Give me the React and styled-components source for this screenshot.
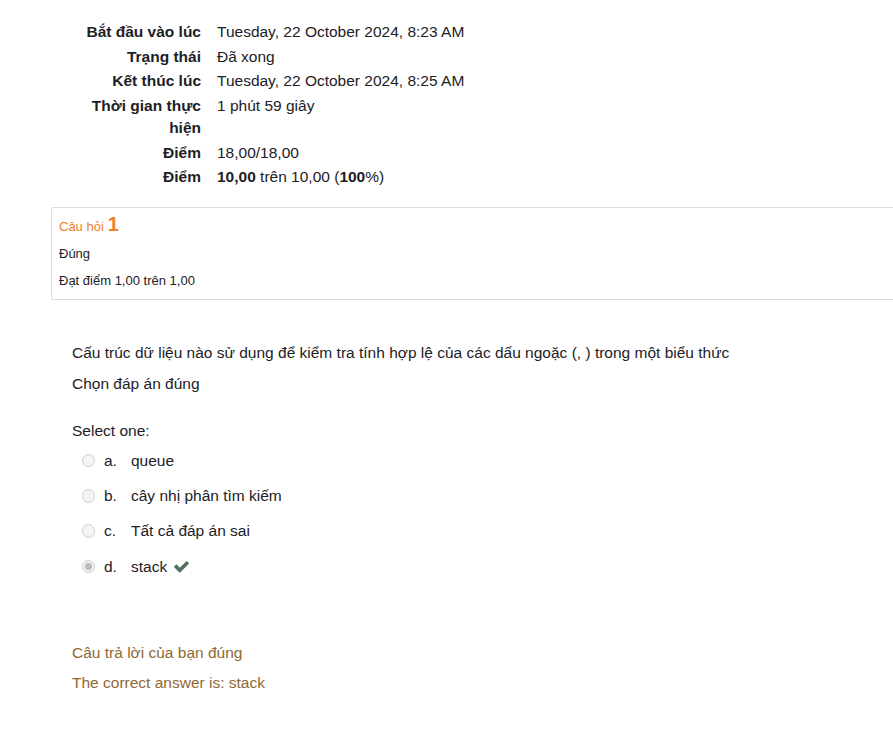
import React from 'react';
import styled, { createGlobalStyle } from 'styled-components';

const Global = createGlobalStyle`
  html, body { margin: 0; padding: 0; background: #fff; overflow: hidden; }
  body { font-family: "Liberation Sans", Arial, sans-serif; color: #1d2125; }
`;

const Page = styled.div`
  padding: 20px 0 0 51px;
  width: 900px;
`;

const Summary = styled.div`
  display: grid;
  grid-template-columns: 120px auto;
  column-gap: 16px;
  margin-left: 30px;
  font-size: 15.5px;
  line-height: 22.5px;
`;

const Label = styled.div`
  text-align: right;
  font-weight: bold;
  padding: 1px 0;
`;

const Value = styled.div`
  padding: 1px 0;
`;

const InfoBox = styled.div`
  margin-top: 17.5px;
  width: 880px;
  border: 1px solid #dcdcdc;
  border-radius: 2px;
  padding: 1px 7px 5px;
  box-sizing: border-box;
`;

const QNo = styled.div`
  display: flex;
  align-items: baseline;
  gap: 4px;
  height: 30px;
  line-height: 30px;
  color: #f0802a;
  font-size: 13px;
`;

const QNum = styled.span`
  font-size: 20px;
  font-weight: bold;
`;

const InfoLine = styled.div`
  font-size: 13px;
  line-height: 27px;
  color: #1d2125;
  padding-top: ${(p) => (p.$first ? 1 : 0)}px;
`;

const Content = styled.div`
  padding-left: 21px;
  font-size: 15.5px;
`;

const Para = styled.div`
  line-height: 24px;
  margin-top: ${(p) => p.$mt || 0}px;
`;

const OptionRow = styled.div`
  display: flex;
  align-items: center;
  height: 35.3px;
  padding-left: 9.5px;
`;

const Radio = styled.span`
  width: 13.5px;
  height: 13.5px;
  border-radius: 50%;
  box-sizing: border-box;
  border: 1px solid #cfcfcf;
  background: ${(p) =>
    p.$checked
      ? 'radial-gradient(circle, #bdbdbd 0 3.3px, #f2f2f2 3.9px)'
      : '#f4f4f4'};
  margin-right: 9px;
  flex: none;
`;

const Letter = styled.span`
  width: 27px;
`;

const Check = styled.svg`
  width: 17px;
  height: 17px;
  margin-left: 6px;
  fill: #52705a;
`;

const Feedback = styled.div`
  color: #8e6935;
  line-height: 24px;
  margin-top: ${(p) => p.$mt || 0}px;
`;

const rows = [
  ['Bắt đầu vào lúc', 'Tuesday, 22 October 2024, 8:23 AM'],
  ['Trạng thái', 'Đã xong'],
  ['Kết thúc lúc', 'Tuesday, 22 October 2024, 8:25 AM'],
  ['Thời gian thực hiện', '1 phút 59 giây'],
  ['Điểm', '18,00/18,00'],
  [
    'Điểm',
    <>
      <b>10,00</b> trên 10,00 (<b>100</b>%)
    </>,
  ],
];

const options = [
  ['a.', 'queue'],
  ['b.', 'cây nhị phân tìm kiếm'],
  ['c.', 'Tất cả đáp án sai'],
  ['d.', 'stack', true],
];

export default function App() {
  return (
    <Page>
      <Global />
      <Summary>
        {rows.map(([l, v], i) => (
          <React.Fragment key={i}>
            <Label>{l}</Label>
            <Value>{v}</Value>
          </React.Fragment>
        ))}
      </Summary>
      <InfoBox>
        <QNo>
          Câu hỏi <QNum>1</QNum>
        </QNo>
        <InfoLine $first>Đúng</InfoLine>
        <InfoLine>Đạt điểm 1,00 trên 1,00</InfoLine>
      </InfoBox>
      <Content>
        <Para $mt={41}>
          Cấu trúc dữ liệu nào sử dụng để kiểm tra tính hợp lệ của các dấu ngoặc (, ) trong một biểu thức
        </Para>
        <Para $mt={7}>Chọn đáp án đúng</Para>
        <Para $mt={23}>Select one:</Para>
        {options.map(([l, t, c]) => (
          <OptionRow key={l}>
            <Radio $checked={c} />
            <Letter>{l}</Letter>
            <span>{t}</span>
            {c && (
              <Check viewBox="0 0 1792 1792">
                <path d="M1671 566q0 40-28 68l-724 724-136 136q-28 28-68 28t-68-28l-136-136-362-362q-28-28-28-68t28-68l136-136q28-28 68-28t68 28l294 295 656-657q28-28 68-28t68 28l136 136q28 28 28 68z" />
              </Check>
            )}
          </OptionRow>
        ))}
        <Feedback $mt={57}>Câu trả lời của bạn đúng</Feedback>
        <Feedback $mt={6}>The correct answer is: stack</Feedback>
      </Content>
    </Page>
  );
}
